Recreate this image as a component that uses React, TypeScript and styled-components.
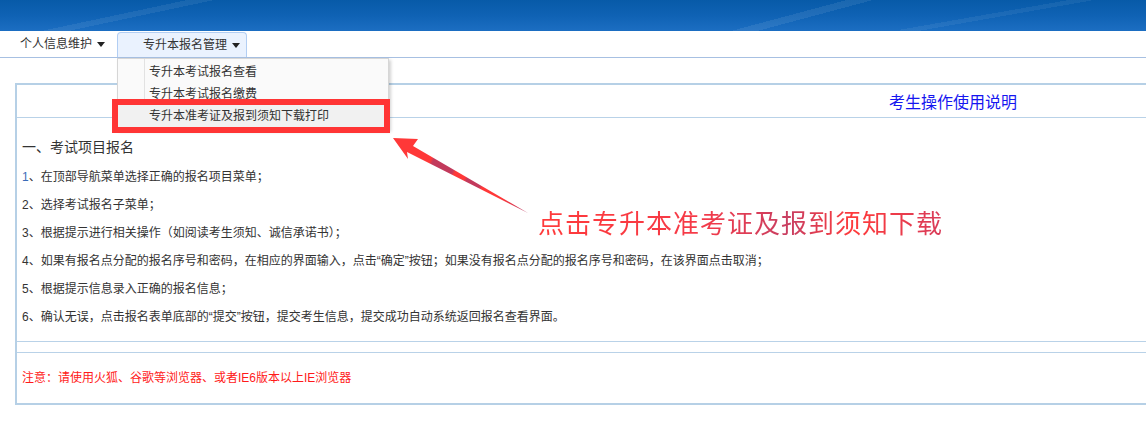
import styled, { createGlobalStyle } from "styled-components"

const GlobalStyle = createGlobalStyle`
  html, body {
    margin: 0;
    padding: 0;
    background: #ffffff;
    overflow: hidden;
  }
  body {
    font-family: "Liberation Sans", "Noto Sans CJK SC", sans-serif;
    color: #333333;
  }
`

const steps = [
  "在顶部导航菜单选择正确的报名项目菜单；",
  "选择考试报名子菜单；",
  "根据提示进行相关操作（如阅读考生须知、诚信承诺书）；",
  "如果有报名点分配的报名序号和密码，在相应的界面输入，点击“确定”按钮；如果没有报名点分配的报名序号和密码，在该界面点击取消；",
  "根据提示信息录入正确的报名信息；",
  "确认无误，点击报名表单底部的“提交”按钮，提交考生信息，提交成功自动系统返回报名查看界面。",
]

const subMenu = ["专升本考试报名查看", "专升本考试报名缴费", "专升本准考证及报到须知下载打印"]

export default function App() {
  return (
    <Page>
      <GlobalStyle />
      <Banner />
      <NavBar>
        <NavItem>
          个人信息维护
          <Caret />
        </NavItem>
        <NavItem $active>
          专升本报名管理
          <Caret />
          <Dropdown>
            {subMenu.map((label, i) => (
              <MenuItem key={label} $hover={i === 2}>
                {label}
                {i === 2 && <Highlight />}
              </MenuItem>
            ))}
          </Dropdown>
        </NavItem>
      </NavBar>

      <Panel>
        <PanelHead>考生操作使用说明</PanelHead>
        <PanelBody>
          <Heading>一、考试项目报名</Heading>
          {steps.map((text, i) => (
            <Step key={i}>
              <StepNo $blue={i === 0}>{i + 1}</StepNo>、{text}
            </Step>
          ))}
        </PanelBody>
        <Spacer />
        <Notice>注意：请使用火狐、谷歌等浏览器、或者IE6版本以上IE浏览器</Notice>
      </Panel>

      <Arrow viewBox="385 130 150 90" width="150" height="90">
        <defs>
          <linearGradient id="shaft" gradientUnits="userSpaceOnUse" x1="393" y1="138" x2="528" y2="213">
            <stop offset="0" stopColor="#ff3838" />
            <stop offset="0.28" stopColor="#ff3838" />
            <stop offset="0.3" stopColor="#c23a5c" />
            <stop offset="0.44" stopColor="#c23a5c" />
            <stop offset="0.46" stopColor="#ff3838" />
            <stop offset="0.53" stopColor="#ff3838" />
            <stop offset="0.55" stopColor="#c23a5c" />
            <stop offset="0.64" stopColor="#c23a5c" />
            <stop offset="0.66" stopColor="#ff3838" />
            <stop offset="0.8" stopColor="#ff3838" />
            <stop offset="1" stopColor="#b83a66" />
          </linearGradient>
        </defs>
        <polygon points="393,138 418,139 413,146 528,213 407,152 408,159" fill="url(#shaft)" />
      </Arrow>
      <Callout>点击专升本准考证及报到须知下载</Callout>
    </Page>
  )
}

const Page = styled.div`
  position: relative;
  width: 1146px;
  height: 424px;
  overflow: hidden;
`

const Banner = styled.div`
  height: 31px;
  background:
    linear-gradient(168deg, transparent 0 42%, rgba(255, 255, 255, 0.07) 42% 48%, transparent 48%) 0 0 / 300px 31px no-repeat,
    linear-gradient(165deg, transparent 0 55%, rgba(255, 255, 255, 0.08) 55% 62%, transparent 62%) 640px 0 / 260px 31px no-repeat,
    linear-gradient(170deg, transparent 0 40%, rgba(255, 255, 255, 0.06) 40% 46%, transparent 46%) 900px 0 / 246px 31px no-repeat,
    linear-gradient(180deg, #075aa8 0%, #0f62b4 50%, #1c6ec2 100%);
`

const NavBar = styled.div`
  height: 26px;
  display: flex;
  align-items: flex-end;
  gap: 12px;
  padding-left: 20px;
  border-bottom: 1px solid #a7c0e2;
`

const NavItem = styled.div<{ $active?: boolean }>`
  position: relative;
  display: flex;
  align-items: center;
  box-sizing: border-box;
  height: 25px;
  padding: ${(p) => (p.$active ? "0 6px 0 25px" : "0")};
  background: ${(p) => (p.$active ? "#eaf2fe" : "transparent")};
  border: ${(p) => (p.$active ? "1px solid #b2cef3" : "none")};
  border-bottom: none;
  border-radius: 4px 4px 0 0;
  font-size: 12px;
  line-height: 25px;
  color: #333333;
`

const Caret = styled.span`
  width: 0;
  height: 0;
  margin-left: 5px;
  border-left: 4px solid transparent;
  border-right: 4px solid transparent;
  border-top: 5px solid #222222;
`

const Dropdown = styled.div`
  position: absolute;
  top: 25px;
  left: -1px;
  width: 272px;
  box-sizing: border-box;
  padding: 2px 0 2px;
  background: #fafafa;
  border: 1px solid #d6d6d6;
  box-shadow: 2px 2px 3px rgba(0, 0, 0, 0.18);
  z-index: 2;

  &::before {
    content: "";
    position: absolute;
    top: 0;
    bottom: 0;
    left: 26px;
    width: 1px;
    background: #e2e2e2;
  }
`

const MenuItem = styled.div<{ $hover?: boolean }>`
  position: relative;
  height: 22px;
  line-height: 22px;
  padding-left: 31px;
  font-size: 12px;
  color: #333333;
  white-space: nowrap;
  background: ${(p) => (p.$hover ? "#f1f1f1" : "transparent")};
`

const Highlight = styled.span`
  position: absolute;
  top: -6px;
  left: -6px;
  right: -2px;
  bottom: -6px;
  border: 6px solid #ff3535;
`

const Panel = styled.div`
  margin: 25px 0 0 15px;
  border: 2px solid #b6d0e6;
  border-right: none;
`

const PanelHead = styled.div`
  height: 32px;
  display: flex;
  align-items: center;
  justify-content: flex-end;
  padding-right: 129px;
  border-bottom: 1px solid #b9d2e8;
  font-size: 16px;
  color: #1616f0;
`

const PanelBody = styled.div`
  padding: 13px 0 10px 5px;
  border-bottom: 1px solid #b9d2e8;
`

const Heading = styled.div`
  height: 32px;
  line-height: 32px;
  font-size: 14px;
  color: #333333;
`

const Step = styled.div`
  height: 28px;
  line-height: 28px;
  font-size: 12px;
  color: #333333;
  white-space: nowrap;
`

const StepNo = styled.span<{ $blue?: boolean }>`
  color: ${(p) => (p.$blue ? "#3a6cb8" : "inherit")};
`

const Spacer = styled.div`
  height: 10px;
  border-bottom: 1px solid #b9d2e8;
`

const Notice = styled.div`
  height: 50px;
  line-height: 50px;
  padding-left: 5px;
  font-size: 12px;
  color: #ff1a1a;
`

const Arrow = styled.svg`
  position: absolute;
  left: 385px;
  top: 130px;
  z-index: 3;
  pointer-events: none;
`

const Callout = styled.div`
  position: absolute;
  left: 538px;
  top: 211px;
  font-size: 26px;
  line-height: 27px;
  letter-spacing: 1px;
  white-space: nowrap;
  background: linear-gradient(90deg, #ff3a3a 0%, #f53a48 40%, #c83f62 62%, #ff3a3a 78%, #d83c5a 100%);
  -webkit-background-clip: text;
  background-clip: text;
  color: transparent;
`
